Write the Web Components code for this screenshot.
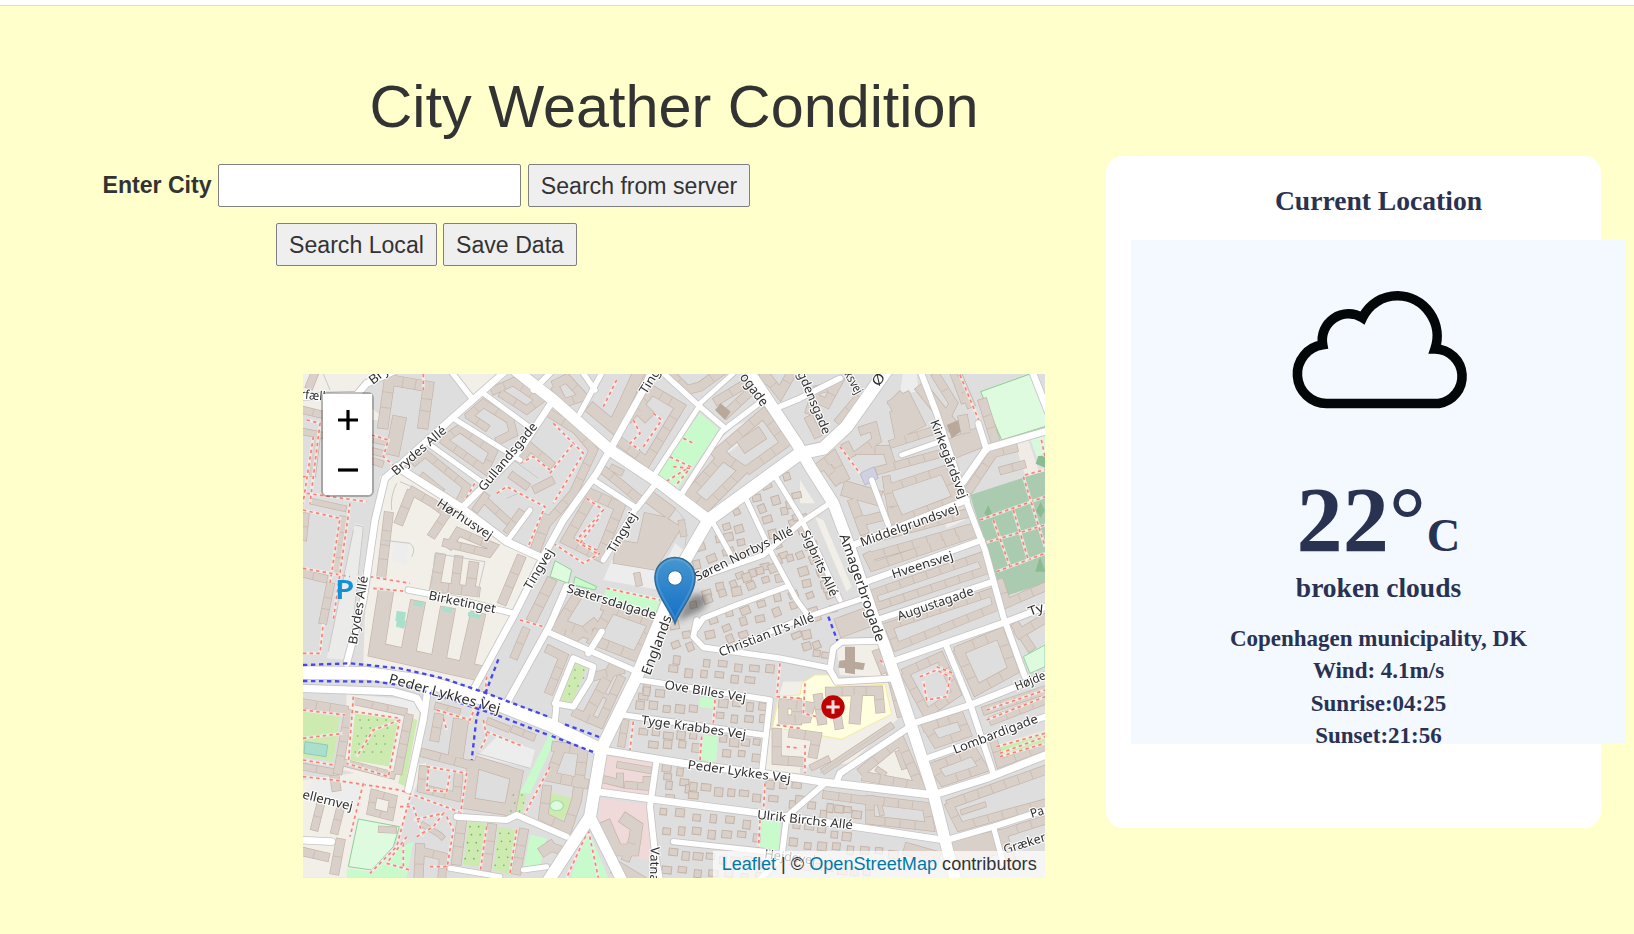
<!DOCTYPE html>
<html lang="en">
<head>
<meta charset="utf-8">
<title>City Weather Condition</title>
<style>
html,body{margin:0;height:100%;overflow:hidden}
body{background:#ffffcc;font-family:"Liberation Sans",Arial,sans-serif;color:#333}
</style>
</head>
<body>
<weather-app></weather-app>
<script>
const define=(name,html,init)=>customElements.define(name,class extends HTMLElement{
  constructor(){super();const t=document.createElement('template');t.innerHTML=html;
    this.attachShadow({mode:'open'}).append(t.content.cloneNode(true));if(init)init(this.shadowRoot,this);}
});

define('app-button',`<style>
:host{display:block}
button{display:block;box-sizing:border-box;width:100%;height:43px;margin:0;padding:0;border:1.5px solid #808080;border-radius:2px;background:#efefef;color:#333;font:23.1px/38px "Liberation Sans",Arial,sans-serif;white-space:nowrap}
</style><button><slot></slot></button>`);

define('city-search',`<style>
:host{display:block;font-size:23.1px}
.row{display:flex;align-items:center;height:43px}
.one{padding-left:102.5px}.two{padding-left:276px;margin-top:16px;gap:6px}
label{font-weight:700;width:115.5px;white-space:nowrap}
input{box-sizing:border-box;width:303px;height:43px;margin:0 7px 0 0;border:1.5px solid #808080;border-radius:2px;background:#fff}
.s{width:222px}.l{width:161px}.d{width:134px}
</style>
<div class="row one"><label for="c">Enter City</label><input id="c"><app-button class="s">Search from server</app-button></div>
<div class="row two"><app-button class="l">Search Local</app-button><app-button class="d">Save Data</app-button></div>`);

define('weather-card',`<style>
:host{display:block;box-sizing:border-box;width:495px;height:672px;border-radius:17px;background:#fff;padding-left:25px;font-family:"Liberation Serif","Times New Roman",serif;font-weight:700;color:#293251;text-align:center}
h2{margin:0;width:495px;height:84px;font-size:27.6px;line-height:89px}
.box{width:495px;height:504px;background:#f4f8ff;display:flex;flex-direction:column;align-items:center;white-space:nowrap}
.box>*{flex:none}
svg{display:block;margin:42px 0 0 7px}
.temp{font-size:92.3px;line-height:100px;height:100px;margin-top:54px;display:flex;align-items:baseline}
.temp small{font-size:46.5px;margin-left:1px}
.desc{font-size:27.5px;line-height:32px;margin-top:1.5px}
.facts{font-size:23px;line-height:32.5px;margin-top:19px}
</style>
<h2>Current Location</h2>
<div class="box">
<svg width="184" height="134" viewBox="1290 282 184 134"><path d="M1326.6 403.5H1438.7A27.4 27.4 0 0 0 1435 349A40.3 40.3 0 0 0 1397.8 295.8A38.5 38.5 0 0 0 1362.5 317.8A26.3 26.3 0 0 0 1322.7 344.8A29.5 29.5 0 0 0 1326.6 403.5Z" fill="none" stroke="#030707" stroke-width="9.6" stroke-miterlimit="8"/></svg>
<div class="temp"><span>22°</span><small>C</small></div>
<div class="desc">broken clouds</div>
<div class="facts"><div>Copenhagen municipality, DK</div><div>Wind: 4.1m/s</div><div>Sunrise:04:25</div><div>Sunset:21:56</div></div>
</div>`);

define('map-zoom',`<style>
:host{display:block;border:2.8px solid rgba(0,0,0,.25);border-radius:6px;background-clip:padding-box;width:49px}
div{box-sizing:border-box;background:#fff;height:50.5px;padding-top:3px;display:grid;place-items:center}
div:first-child{border-bottom:1.5px solid #ccc;border-radius:4px 4px 0 0}div:last-child{border-radius:0 0 4px 4px;padding-top:2px}
svg{display:block}
</style>
<div><svg width="20" height="20" viewBox="0 0 20 20"><path d="M0 10H20M10 0V20" stroke="#000" stroke-width="3.2"/></svg></div>
<div><svg width="20" height="20" viewBox="0 0 20 20"><path d="M0 10H20" stroke="#000" stroke-width="3.2"/></svg></div>`);

define('map-credit',`<style>
:host{display:block;box-sizing:border-box;height:27px;padding:0 8.3px;background:rgba(255,255,255,.7);font-size:18.13px;line-height:26px;color:#333;white-space:nowrap}
a{color:#0078a8}
</style><a>Leaflet</a> | © <a>OpenStreetMap</a> contributors`);

/* Map sheet: three drawing units to a pixel. */
const areas=[
 ['#f2efe9','9,12 230,12 170,80 260,150 120,150 9,110'],
 ['#f2efe9','450,0 640,0 530,90'],
 ['#f2efe9','240,320 300,290 470,400 620,515 740,570 640,740 520,960 190,880 200,600'],
 ['#f2efe9','9,1230 380,1180 330,1290 290,1400 200,1523 9,1523'],
 ['#f2efe9','140,970 360,1020 320,1250 130,1200'],
 ['#ebebe9','165,460 192,466 150,870 80,865'],
 ['#ededed','175,975 345,990 350,1025 290,1010 170,990'],
 ['#ededed','40,1220 190,1235 180,1295 9,1290'],
 ['#ededed','590,1100 705,1140 690,1195 530,1160'],
 ['#ededed','280,510 325,515 320,585 275,570'],
 ['#ededed','935,570 1090,590 1125,520 1150,540 1080,660 910,630'],
 ['#ededed','1250,250 1245,225 1300,170 1345,150 1360,190 1270,260'],
 ['#ededed','1810,0 1850,0 1855,65 1800,70'],
 ['#ededed','1930,440 1990,430 1995,450 1940,475'],
 ['#c8facc','1200,130 1260,180 1130,360 1065,310'],
 ['#c8facc','920,650 1080,685 1070,725 910,690'],
 ['#defbe0','765,572 815,600 805,640 750,620','#8fcf9a'],
 ['#c8facc','825,620 890,650 885,660 820,645','#8fcf9a'],
 ['#defbe0','2042,65 2190,12 2250,165 2105,210','#88cf92'],
 ['#d8f8dc','2190,205 2235,195 2235,250 2210,260'],
 ['#f0ebe5','2145,220 2185,210 2215,300 2175,315'],
 ['#abcbb0','2010,375 2235,302 2235,640 2105,682'],
 ['#defbe0','2170,860 2235,825 2235,890 2190,910','#90d4a0'],
 ['#cdebb0','9,1025 120,1040 100,1175 9,1160'],
 ['#cdebb0','165,1030 300,1050 270,1190 150,1170'],
 ['#cdebb0','335,1045 352,1050 315,1250 295,1240'],
 ['#aadfcb','15,1115 83,1125 78,1160 12,1150','#90c8bc'],
 ['#cdebb0','825,880 860,890 815,1005 775,985'],
 ['#cdebb0','505,1355 560,1360 540,1490 490,1485'],
 ['#cdebb0','595,1370 650,1380 630,1515 580,1500'],
 ['#cdebb0','635,1260 680,1265 665,1340 620,1330'],
 ['#c8facc','750,1090 765,1110 690,1270 660,1270'],
 ['#c8facc','690,1395 740,1405 720,1490 672,1490'],
 ['#cdebb0','750,1268 820,1285 790,1350 735,1330'],
 ['#defbe0','175,1347 298,1370 280,1430 215,1500 145,1490','#8fcf9a'],
 ['#c8facc','140,1495 215,1505 300,1430 340,1415 320,1523 140,1523'],
 ['#c8facc','1200,980 1243,985 1240,1017 1198,1010'],
 ['#c8facc','1210,1095 1255,1100 1248,1175 1203,1170'],
 ['#c8facc','1387,1350 1443,1358 1435,1440 1380,1435'],
 ['#c8facc','865,1380 925,1523 810,1523'],
 ['#f0d9d9','920,1155 1065,1180 1050,1290 905,1260'],
 ['#f0d9d9','900,1285 1050,1305 1065,1430 1045,1470 970,1460 895,1340'],
 ['#f2efe9','1450,935 1770,930 1800,1040 1650,1180 1400,1200 1430,1000'],
 ['#ffffe0','1437,978 1500,975 1506,940 1545,915 1590,915 1610,950 1755,943 1775,1032 1700,1070 1625,1108 1500,1085 1418,1072','#f2ec9c'],
 ['#f2efe9','1610,830 1740,820 1760,920 1620,915'],
 ['#f2efe9','1400,1080 1500,1090 1500,1215 1390,1200'],
 ['#f2efe9','1680,1220 1810,1100 1860,1250 1700,1240'],
 ['#d0d0e3','1680,310 1722,290 1735,325 1695,345','#bbb9cc'],
 ['#f2efe9','1500,330 1545,400 1500,400'],
 ['#f2efe9','1545,440 1570,450 1655,650 1640,665'],
 ['#eee8d8','2090,1125 2235,1080 2235,1110 2095,1170'],
 ['#cdebb0','2095,1130 2235,1085 2235,1115 2100,1160'],
];
const roads=[
 [20,'0,80 170,75 200,40 290,0'],[20,'140,880 190,690 225,450 255,325 300,285 450,150 620,0'],[16,'450,0 520,90'],
 [22,'290,290 480,410 620,515 740,570'],[15,'390,225 545,335'],[15,'460,145 660,270'],[15,'550,70 700,180'],
 [20,'490,410 540,360 660,240 760,90'],[20,'520,960 640,740 730,560 790,450 890,310 930,240 1030,60 1060,-10'],
 [20,'620,1000 750,765 800,650'],[17,'325,660 480,690 640,730'],[15,'620,515 690,420'],[17,'880,330 1010,415 1060,350'],
 [16,'910,570 1005,420'],[16,'1080,0 1200,110 1270,170'],[15,'1200,105 1060,320'],[14,'1300,10 1200,100'],[16,'1390,90 1265,185 1140,380'],
 [16,'840,130 910,0'],[16,'850,10 885,60'],[17,'700,60 770,-10'],[17,'1440,110 1500,85 1620,25'],[15,'1240,460 1295,560'],
 [15,'1340,390 1420,560 1490,690 1530,745'],[15,'1420,310 1500,440 1560,560 1620,690'],[16,'1110,650 1190,625 1390,555 1500,460 1590,400'],
 [16,'1190,775 1210,745 1310,705 1460,650'],[17,'1190,750 1180,800 1210,832 1440,865 1590,895'],[16,'1330,825 1400,790 1510,745 1690,685'],
 [18,'1590,900 1600,835 1625,815 1740,812'],[18,'1590,900 1610,935 1790,925'],
 [18,'1860,0 1910,130 1990,370 2055,540 2110,740 2175,920'],[19,'1660,525 2000,390'],[16,'1715,330 1765,465'],[15,'1805,255 1920,215'],
 [18,'1700,635 2045,510'],[18,'1730,750 2080,635'],[20,'1990,335 2060,235 2250,180'],[18,'2035,160 2060,240'],[20,'2195,0 2250,140'],
 [19,'1790,870 2120,755 2250,705'],[19,'1840,1060 2010,1005 2250,910'],[18,'1940,830 2010,1000 2080,1210'],[18,'1880,1165 2250,1035'],
 [18,'1940,1410 2080,1370 2250,1315'],[16,'2080,1370 2110,1480'],[19,'1830,1070 1620,1210 1610,1235'],
 [17,'1020,930 1410,990 1385,1210'],[17,'970,1035 1390,1095'],[20,'890,1265 1150,1300 1500,1345 1930,1410'],
 [18,'1070,1170 1050,1310 1065,1450 1080,1530'],[16,'1120,1415 1400,1445'],[17,'1575,1240 1460,1340 1445,1460 1370,1540'],
 [17,'740,785 1010,905'],[18,'905,785 865,850'],[18,'820,865 880,890 870,930 820,1010 765,1000 820,865'],[18,'770,1000 765,1050'],
 [18,'470,1340 620,1350 650,1335 800,1400'],[22,'0,955 280,965 350,985 370,1020'],[20,'385,945 370,1050 325,1260'],
 [20,'0,1410 95,1415'],[15,'450,1495 600,1520'],[15,'670,1500 740,1490'],
 [22,'905,1140 1150,1180 1500,1225 1560,1235 1900,1275 2060,1225 2250,1150'],
 [34,'620,-20 760,90 930,240 1080,340 1225,450'],[38,'1225,450 1500,250 1570,235 1640,170 1760,0'],
 [36,'1225,450 1150,580 1085,740 1010,920 905,1135 870,1340 740,1540'],[32,'870,1340 970,1540'],
 [34,'1330,-20 1490,220 1530,290 1600,400 1645,520 1720,740 1755,830 1835,1070 1900,1270 1945,1450 1970,1540'],
 [38,'0,908 200,910 380,935 560,990 750,1065 905,1140'],
];
/* Perimeter buildings: wall thickness, then the centre line. */
const rings=[
 [30,'270,20 250,160'],[30,'270,30 385,50 370,160'],[40,'295,160 280,235'],[22,'585,60 640,35 720,90 680,120 610,75'],
 [22,'510,135 550,100 630,150 640,190 600,210'],[20,'510,140 555,170'],[22,'435,205 480,175 580,245 555,300 435,215'],
 [20,'345,275 375,250 500,350 480,390'],[18,'370,320 420,360'],[22,'640,320 675,345'],[20,'530,415 555,380'],[20,'565,400 620,450'],[20,'625,480 660,430'],
 [22,'665,265 690,230 750,280'],[22,'710,355 750,335'],[22,'450,525 475,485 580,530 565,550 440,520'],[24,'340,365 400,400 440,430 400,490'],
 [26,'330,375 300,450'],[26,'265,440 245,610'],[28,'420,565 405,650 525,665'],[24,'475,570 465,650'],[28,'520,590 510,660'],
 [26,'660,570 610,690'],[30,'740,450 710,530'],[30,'750,640 700,740'],[16,'40,395 130,415'],[18,'50,210 38,310'],[22,'130,450 110,600'],
 [18,'9,185 60,195'],[20,'9,120 70,135'],[22,'9,610 70,625'],[22,'90,650 70,750'],[22,'15,440 9,500'],[18,'230,210 250,215'],[18,'225,245 245,250'],[18,'225,275 240,280'],
 [22,'40,20 30,45'],[45,'255,680 230,840 520,905'],[44,'350,715 330,820'],[44,'440,735 420,845'],[44,'530,750 505,860'],
 [22,'675,785 645,855'],[26,'9,1000 130,1020'],[20,'170,995 310,1025'],[24,'145,1030 115,1200'],[24,'325,1045 295,1200'],[20,'140,1180 275,1215'],[20,'9,1190 90,1205'],
 [26,'415,1045 405,1100'],[20,'415,1010 470,1025'],[44,'480,1070 470,1140'],[24,'375,1150 510,1185'],[18,'570,1055 620,1075'],[20,'645,1080 695,1100'],
 [24,'370,1200 365,1255 470,1280 475,1220'],[34,'540,1180 650,1215 630,1320 505,1300 520,1190'],
 [26,'105,1230 108,1250'],[22,'60,1310 45,1370'],[22,'120,1320 105,1380'],[24,'9,1445 75,1460'],[26,'120,1420 105,1500'],
 [20,'222,1270 280,1285 270,1340 212,1325 222,1270'],[18,'245,1378 280,1380'],[28,'485,1350 470,1470'],[26,'575,1375 560,1490'],[26,'670,1390 650,1500'],[26,'360,1435 355,1530'],[22,'370,1445 430,1460 425,1530'],[14,'370,1365 420,1395 425,1400'],
 [30,'735,1440 750,1430'],[24,'770,40 800,25 850,80 790,100 770,60'],[34,'880,120 940,170 970,110 1020,0'],[26,'990,140 1055,60 1140,110 1040,275 960,215'],[40,'1020,115 1035,130'],
 [26,'1110,10 1160,60 1200,50 1270,0'],[24,'1255,90 1330,45 1350,65 1280,130'],[26,'1350,15 1400,30'],[26,'1480,0 1440,70 1400,20'],
 [26,'1270,255 1170,370 1220,410 1330,300 1270,260'],[26,'1250,250 1390,130 1455,220 1350,295'],[42,'1340,220 1370,200'],
 [24,'750,130 830,180 880,240 820,370 750,450'],[24,'910,300 960,340 1020,390'],[18,'940,295 960,305'],
 [28,'870,370 960,410 900,560 800,510 870,390'],[38,'1060,390 1100,420'],[70,'1060,470 1040,560 980,550'],[50,'1110,480 1060,560'],[18,'1145,460 1150,490'],[18,'1012,618 1016,638'],
 [24,'760,780 830,800 880,760'],[28,'830,680 780,760 860,790'],[28,'920,710 1060,760 1010,860 880,810 930,720'],[24,'750,840 790,860 750,960'],[24,'960,930 900,1060 830,1030'],[24,'880,920 960,900'],[30,'940,890 860,1040'],[12,'900,965 920,980'],
 [28,'770,1130 850,1140 830,1290 800,1380'],[28,'780,1140 750,1220 850,1240'],[26,'740,1260 730,1340 790,1370'],[24,'750,1430 780,1440'],
 [18,'960,1185 1045,1200'],[20,'920,1230 960,1240 960,1220'],[20,'985,1245 1040,1250 1040,1230'],[34,'920,1370 950,1440 1000,1440 1010,1370 980,1350'],[24,'1010,1380 980,1460'],
 [20,'975,1060 965,1120'],[40,'960,1500 1010,1530'],
 [24,'1530,120 1550,60 1610,45 1580,100 1560,90'],[24,'1620,150 1670,90'],[24,'1530,150 1550,190'],
 [70,'1810,110 1830,150'],[34,'1790,140 1800,190'],[24,'1780,100 1800,80'],[24,'1690,180 1720,170 1730,210 1690,240 1760,240 1770,270'],
 [22,'1740,300 1960,240'],[22,'1780,220 1890,185'],[36,'1870,60 1950,160'],[24,'1910,20 1960,100 1940,140'],[24,'1980,30 2010,100'],[18,'1960,10 1990,90'],[60,'1970,230 2020,210'],[26,'2050,100 2085,210'],
 [24,'2010,355 2080,250 2140,235'],[22,'2110,300 2165,285'],[22,'1765,355 1930,300 1970,385 1800,450 1765,370'],[22,'1760,330 1780,450'],
 [28,'1560,290 1600,260 1630,320'],[26,'1580,290 1610,330'],[44,'1650,360 1720,380'],[26,'1660,400 1690,480'],[26,'1700,450 1740,440'],[24,'1640,230 1650,250'],
 [24,'1700,510 2000,430'],[24,'1710,560 2010,475 2020,490 1720,590 1705,560'],[22,'1720,670 2040,560 2060,600 1730,710 1720,680'],[22,'1760,770 2080,665 2090,710 1790,830 1770,780'],
 [24,'2100,640 2120,700 2235,650'],[28,'1990,150 2005,230'],
 [58,'1640,765 1675,752'],[20,'1730,850 1750,900'],[24,'1820,905 1920,860 1970,970 1880,1030 1820,920'],
 [28,'1980,840 2100,790 2140,900 2030,960 1980,850'],[26,'2160,790 2235,745'],[24,'2150,770 2190,830'],
 [24,'1880,1070 1980,1040 2000,1090 1910,1120 1880,1070'],[24,'1900,1190 2020,1145 2050,1195 1930,1235 1900,1190'],[24,'2060,1020 2235,960 2235,990 2080,1050'],[22,'2080,1110 2100,1180 2235,1130'],
 [26,'1955,1300 2235,1200'],[24,'1950,1310 1980,1370 2235,1300'],[14,'1990,1325 2050,1305'],[24,'2110,1390 2235,1350'],[26,'2110,1400 2130,1460'],
 [70,'1990,1440 2080,1420'],[26,'1690,1200 1800,1110 1860,1250 1700,1220'],[14,'1735,1200 1750,1210'],[14,'1795,1150 1810,1190'],
 [24,'1710,1290 1880,1310 1890,1370 1710,1350 1710,1290'],[12,'1740,1310 1745,1330'],[22,'1580,1275 1690,1290'],[18,'1575,1200 1770,1070'],[18,'1540,1190 1580,1170'],
 [26,'1590,965 1735,962 1740,1015'],[26,'1555,985 1565,1050'],[32,'1670,985 1665,1045'],[26,'1450,1000 1530,1010 1520,1045 1450,1050 1450,1010'],[28,'1490,1000 1490,1050'],[26,'1430,1090 1430,1170 1500,1175'],[26,'1480,1090 1550,1100 1540,1150'],[24,'1612,1040 1616,1065'],
 [20,'1770,910 1800,1030'],[36,'1830,1440 1900,1460']
];
/* Rows of detached houses: x0 y0 x1 y1 count. */
const rows=[
 [1310,430,1330,560,4],[1280,470,1290,540,3],[1370,380,1450,560,6],[1400,350,1480,460,4],[1460,320,1490,380,2],[1470,400,1580,650,7],[1510,450,1590,680,7],
 [1200,530,1260,510,2],[1190,580,1280,550,3],[1320,620,1470,560,5],[1220,670,1420,590,6],[1180,700,1440,620,7],[1500,560,1540,720,5],[1240,750,1480,670,6],[1230,790,1480,710,6],
 [1290,810,1330,790,2],[1550,740,1600,720,2],[1520,790,1580,860,3],[1490,800,1550,850,3],
 [1120,720,1130,870,4],[1160,790,1170,830,2],[1120,900,1350,930,6],[1220,880,1410,900,5],[1040,950,1020,1010,3],[1060,1010,1180,1020,4],[1270,1000,1390,1010,4],[1040,960,1080,970,2],[1260,1040,1390,1050,4],
 [1030,1085,1180,1100,5],[1060,1120,1190,1130,4],[1270,1110,1370,1120,4],[1280,1150,1370,1160,3],
 [1100,1190,1110,1280,4],[1140,1210,1180,1280,4],[1180,1250,1370,1280,6],[1410,1240,1490,1250,3],[1420,1290,1480,1300,2],
 [1090,1325,1340,1360,6],[1100,1380,1370,1400,7],[1120,1450,1380,1480,8],[1100,1500,1380,1520,7],[1490,1360,1640,1400,5],[1480,1420,1780,1450,8],[1500,1290,1570,1330,3],[1590,1310,1670,1330,4],[1480,1480,1700,1510,7]
];
const paths=[
 '370,12 370,60','20,150 60,160 30,400','9,320 30,320','20,370 200,395','9,420 120,445 90,640','9,595 150,620','40,200 9,400','150,400 100,750','230,400 190,620','215,195 265,210 250,260 285,290 440,170','440,270 530,330 490,400','300,290 490,405','590,370 620,350 735,410 680,540','660,280 700,260 750,300','210,620 330,640','220,655 330,665',
 '950,30 910,110','1000,150 1020,190 990,220 1020,240','1060,130 1085,150 1030,230','1150,205 1180,220','1110,260 1170,290 1090,340','1120,290 1170,295 1120,355','760,160 850,250 760,400','750,310 820,220','860,385 910,420 830,510 890,540','890,550 840,520 900,440','760,520 850,580 900,550','920,655 1080,690','1620,230 1680,310','1980,15 2040,160',
 '2175,315 2250,295','2040,450 2235,380','2050,520 2235,465','2090,605 2235,550','2170,320 2235,530','2080,450 2130,590','2140,420 2185,570','2220,190 2235,260',
 '9,1020 135,1035','9,1105 130,1090','9,1170 100,1185','160,980 145,1180','165,1025 300,1045 265,1220 140,1180','300,1050 220,1080 170,1160','9,1220 100,1230 300,1260 490,1330','190,1240 150,1400','330,1280 290,1430 210,1510','300,1310 340,1310 370,1400','380,1190 500,1210 480,1340','385,1200 380,1260 440,1265 450,1210','440,1340 460,1380 440,1500','350,1400 400,1370 430,1330 340,1350','310,1420 310,1500','320,1400 260,1480 330,1500','410,1020 510,1050 530,1000','430,1045 440,1080','550,1050 560,1100 540,1140','560,1085 670,1130','560,920 555,970','750,1190 670,1340','560,1370 540,1510','650,1380 630,1510','390,1490 440,1490','660,750 730,770','9,850 60,850 70,760','865,1380 800,1523','865,1380 895,1523','1000,1055 990,1140','1245,990 1240,1060','1205,1100 1200,1170','1440,880 1430,980','1430,980 1500,985','1430,1065 1500,1075','1515,940 1510,1030 1550,1040','1395,1240 1390,1330','1380,1350 1375,1440','1460,1130 1500,1135','1515,1125 1515,1210','1740,870 1765,895','1860,920 1910,900 1950,920 1940,980 1880,990 1870,930','1910,890 1960,910','2060,1050 2235,980','2060,1020 2235,960','2020,1010 2055,1150','2100,1150 2235,1100','2090,1130 2235,1090','2100,1160 2235,1120'
];
const cycles=['9,885 150,880 300,895 430,925 560,970 750,1042','9,933 230,935 330,950 430,982 590,1035 750,1097','595,868 560,960 530,1040 515,1170','795,1063 900,1102','755,1098 885,1148','1585,740 1612,812'];
const labels=[
 ['Bry',218,45,270,5],['rfæll',0,85,75,92],['Brydes Allé',288,318,442,185],['Gullandsgade',552,366,714,170],['Hørhusvej',408,406,568,510],['Tingvej',692,662,762,545],['Birketinget',384,688,585,730],['Brydes Allé',170,825,204,620],
 ['Peder Lykkes Vej',264,938,596,1030,41],['ellemvej',5,1285,156,1322],['Ting',1038,75,1082,5],['Tingvej',942,552,1012,437],['Sætersdalgade',798,666,1065,748],['Søren Norbys Allé',1192,634,1482,492],["Christian II's Allé",1262,860,1545,752],
 ['Sigbrits Allé',1502,488,1592,682],['Amagerbrogade',1618,497,1730,818,41],['Middelgrundsvej',1686,530,1978,425],['Hveensvej',1780,626,1962,568],['Augustagade',1797,752,2024,674],['Kirkegårdsvej',1890,155,1980,388],
 ['ogade',1318,22,1385,112,41],['gdensgade',1492,10,1570,195],['ksvej',1632,12,1668,76],['Ø',1735,52,1758,22,41],['Englands',1050,918,1116,742,41],['Ove Billes Vej',1092,956,1336,996],['Tyge Krabbes Vej',1022,1062,1336,1106],['Peder Lykkes Vej',1162,1196,1470,1238],
 ['Ulrik Birchs Allé',1370,1346,1657,1378],['Vatna',1052,1430,1050,1535],['Højde',2150,962,2240,926],['Lombardigade',1965,1152,2216,1056],['Pa',2195,1344,2234,1332],['Græker',2115,1452,2240,1412],['Ty',2190,738,2234,722],['Hejdevej',1392,1464,1545,1484]
];
function sheet(){
 const g=[];
 for(const [f,p,s] of areas)g.push(`<polygon points="${p}" fill="${f}"${s?` stroke="${s}" stroke-width="3"`:''}/>`);
 for(const [w,p] of rings)g.push(`<polyline points="${p}" fill="none" stroke="#c4b3a8" stroke-width="${w+4}" stroke-linecap="square"/>`);
 for(const [w,p] of rings)g.push(`<polyline points="${p}" fill="none" stroke="#d9d0c9" stroke-width="${w}" stroke-linecap="square"/>`);
 for(const [w,p] of rings)if(w>18&&w<32){ /* party walls */
  const q=p.split(' ').map(s=>s.split(',').map(Number));
  for(let i=0;i+1<q.length;i++){const [a,b]=q[i],[c,d]=q[i+1],L=Math.hypot(c-a,d-b),n=Math.floor(L/48);
   for(let k=1;k<=n;k++){const t=k/(n+1),x=a+(c-a)*t,y=b+(d-b)*t,u=-(d-b)/L*w/2,v=(c-a)/L*w/2;g.push(`<path d="M${(x-u).toFixed(0)} ${(y-v).toFixed(0)}L${(x+u).toFixed(0)} ${(y+v).toFixed(0)}" stroke="#c9bab0" stroke-width="2.5"/>`)}}}
 rows.forEach(([a,b,c,d,n],r)=>{for(let i=0;i<n;i++){const t=n>1?i/(n-1):0,x=a+(c-a)*t,y=b+(d-b)*t+((i*5+r)%3-1)*4,w=19+(i*7+r*3)%11,h=18+(i*5+r)%9,ang=y<840?-22+((i+r)%3)*5:6;
  g.push(`<rect x="${-w/2}" y="${-h/2}" width="${w}" height="${h}" transform="translate(${x.toFixed(0)} ${y.toFixed(0)}) rotate(${ang})" fill="#d9d0c9" stroke="#c4b3a8" stroke-width="3"/>`)}});
 g.push('<g fill="#b9a99c"><path d="M1245 120L1262 100L1292 125L1275 150Z"/><path d="M1940 165L1975 150L1982 185L1955 205Z"/><path d="M1635 830H1665V875L1695 880L1690 900L1665 897V913L1635 908V895L1615 893L1618 872L1635 870Z"/></g>');
 g.push('<g fill="#aadfcb"><path d="M290 722l28 5-4 25h-28zM342 692l30 6-4 14-30-6zM430 708l28 5-4 16-28-6zM505 725l38 6-4 16-36-8zM290 752l28 0-6 24-24-6z"/></g>');
 g.push('<g fill="#8bbb91"><path d="M2065 405l10 25-10 14-12-14zM2222 395l12 26-12 22-14-20zM2220 560l16 45h-30zM2215 258l20 0v35l-28-12z"/></g>');
 g.push('<g fill="#6fae68">');for(const [x,y,w,h] of [[180,1050,100,110],[510,1370,35,110],[600,1390,35,100],[640,1275,30,50],[825,900,30,90]])for(let j=0;j<h;j+=24)for(let i=0;i<w;i+=26)g.push(`<circle cx="${x+i-j*(x===825?.35:.15)+((j/24)%2)*8}" cy="${y+j}" r="2.5"/>`);g.push('</g>');
 g.push('<ellipse cx="770" cy="1307" rx="20" ry="15" fill="#defbe0" stroke="#aadfaa" stroke-width="4"/>');
 for(const p of paths)g.push(`<polyline points="${p}" fill="none" stroke="#f3eeec" stroke-width="9" opacity=".8"/><polyline points="${p}" fill="none" stroke="#fa8072" stroke-width="5" stroke-dasharray="10 10"/>`);
 g.push('<g fill="none" stroke="#c8c8c8" stroke-width="3"><path d="M290 340Q270 380 275 420M300 335L335 350M245 510L330 520Q350 535 335 560M165 465L190 470L150 850M160 480L85 845M395 640L405 550L555 575L530 680M620 385L655 370M640 270L715 325M690 1195L530 1150M1130 420Q1170 450 1155 530M1560 1210L1760 1075M70 12L90 60"/></g>');
 for(const [w,p] of roads)g.push(`<polyline points="${p}" fill="none" stroke="#c6c4c3" stroke-width="${w+5}" stroke-linejoin="round" stroke-linecap="round"/>`);
 for(const [w,p] of roads)g.push(`<polyline points="${p}" fill="none" stroke="#fff" stroke-width="${w}" stroke-linejoin="round" stroke-linecap="round"/>`);
 for(const p of cycles)g.push(`<polyline points="${p}" fill="none" stroke="#4545f5" stroke-width="7" stroke-dasharray="13 11"/>`);
 g.push('<g font-family="Noto Sans,sans-serif" fill="#303030" stroke="#fff" stroke-opacity=".85" stroke-width="7" stroke-linejoin="round" paint-order="stroke">');
 for(const [t,a,b,c,d,s] of labels)g.push(`<text font-size="${s||37.5}" textLength="${Math.hypot(c-a,d-b).toFixed(0)}" lengthAdjust="spacingAndGlyphs" transform="translate(${a} ${b}) rotate(${(Math.atan2(d-b,c-a)*180/Math.PI).toFixed(1)})">${t}</text>`);
 g.push('</g><text x="105" y="686" font-family="Noto Sans,sans-serif" font-weight="600" font-size="80" textLength="58" lengthAdjust="spacingAndGlyphs" fill="#0f92da">P</text>');
 g.push('<circle cx="1599" cy="1011" r="35" fill="#bf0000"/><path d="M1599 991V1031M1579 1011H1619" stroke="#f4dede" stroke-width="9"/>');
 return g.join('');
}
define('city-map',`<style>
:host{display:block;position:relative;width:742px;height:503.5px;overflow:hidden}
.sheet{display:block;width:742px;height:503.5px}
.art{filter:blur(1.3px)}
.pin{position:absolute;left:351px;top:182px}
map-zoom{position:absolute;left:18px;top:17.5px}
map-credit{position:absolute;right:0;bottom:0}
</style>
<svg class="sheet" viewBox="9 12 2226 1510.5"><rect x="0" y="0" width="2250" height="1530" fill="#dfdedf"/><g class="art"></g></svg>
<svg class="pin" width="70" height="70" viewBox="0 0 70 70"><defs><linearGradient id="b" x1="0" y1="0" x2="0" y2="1"><stop offset="0" stop-color="#4696d0"/><stop offset="1" stop-color="#126fc6"/></linearGradient><filter id="f" x="-30%" y="-30%" width="160%" height="160%"><feGaussianBlur stdDeviation="3"/></filter></defs>
<path d="M22 66L32 46Q40 35 49 39Q57 46 46 55Z" fill="#222" opacity=".45" filter="url(#f)"/>
<path d="M21 67.5C17 55 .9 38 .9 21.5A20.1 20.1 0 0 1 41.1 21.5C41.1 38 25 55 21 67.5Z" fill="url(#b)" stroke="#2e6c97" stroke-width="1.5"/><path d="M21 63C17 52 2.8 36 2.8 21.5A18.2 18.2 0 0 1 39.2 21.5C39.2 36 25 52 21 63Z" fill="none" stroke="#fff" stroke-opacity=".13" stroke-width="1.8"/><circle cx="21" cy="22" r="7.2" fill="#fff" stroke="#2e6c97" stroke-width="1"/></svg>
<map-zoom></map-zoom><map-credit></map-credit>`,root=>{root.querySelector('.art').innerHTML=sheet()});

define('weather-app',`<style>
:host{display:block;height:934px;overflow:hidden}
.edge{box-sizing:border-box;height:6px;background:#fff;border-bottom:1.4px solid #dcdde2}
.cols{display:grid;grid-template-columns:1106px 495px}
h1{margin:68px 0 0;width:1348px;text-align:center;font-weight:400;font-size:59.35px;line-height:66px}
city-search{margin-top:24px}
city-map{margin:108px 0 0 303px}
weather-card{margin-top:150px}
</style>
<div class="edge"></div>
<div class="cols"><section><h1>City Weather Condition</h1><city-search></city-search><city-map></city-map></section><weather-card></weather-card></div>`);
</script>
</body>
</html>
